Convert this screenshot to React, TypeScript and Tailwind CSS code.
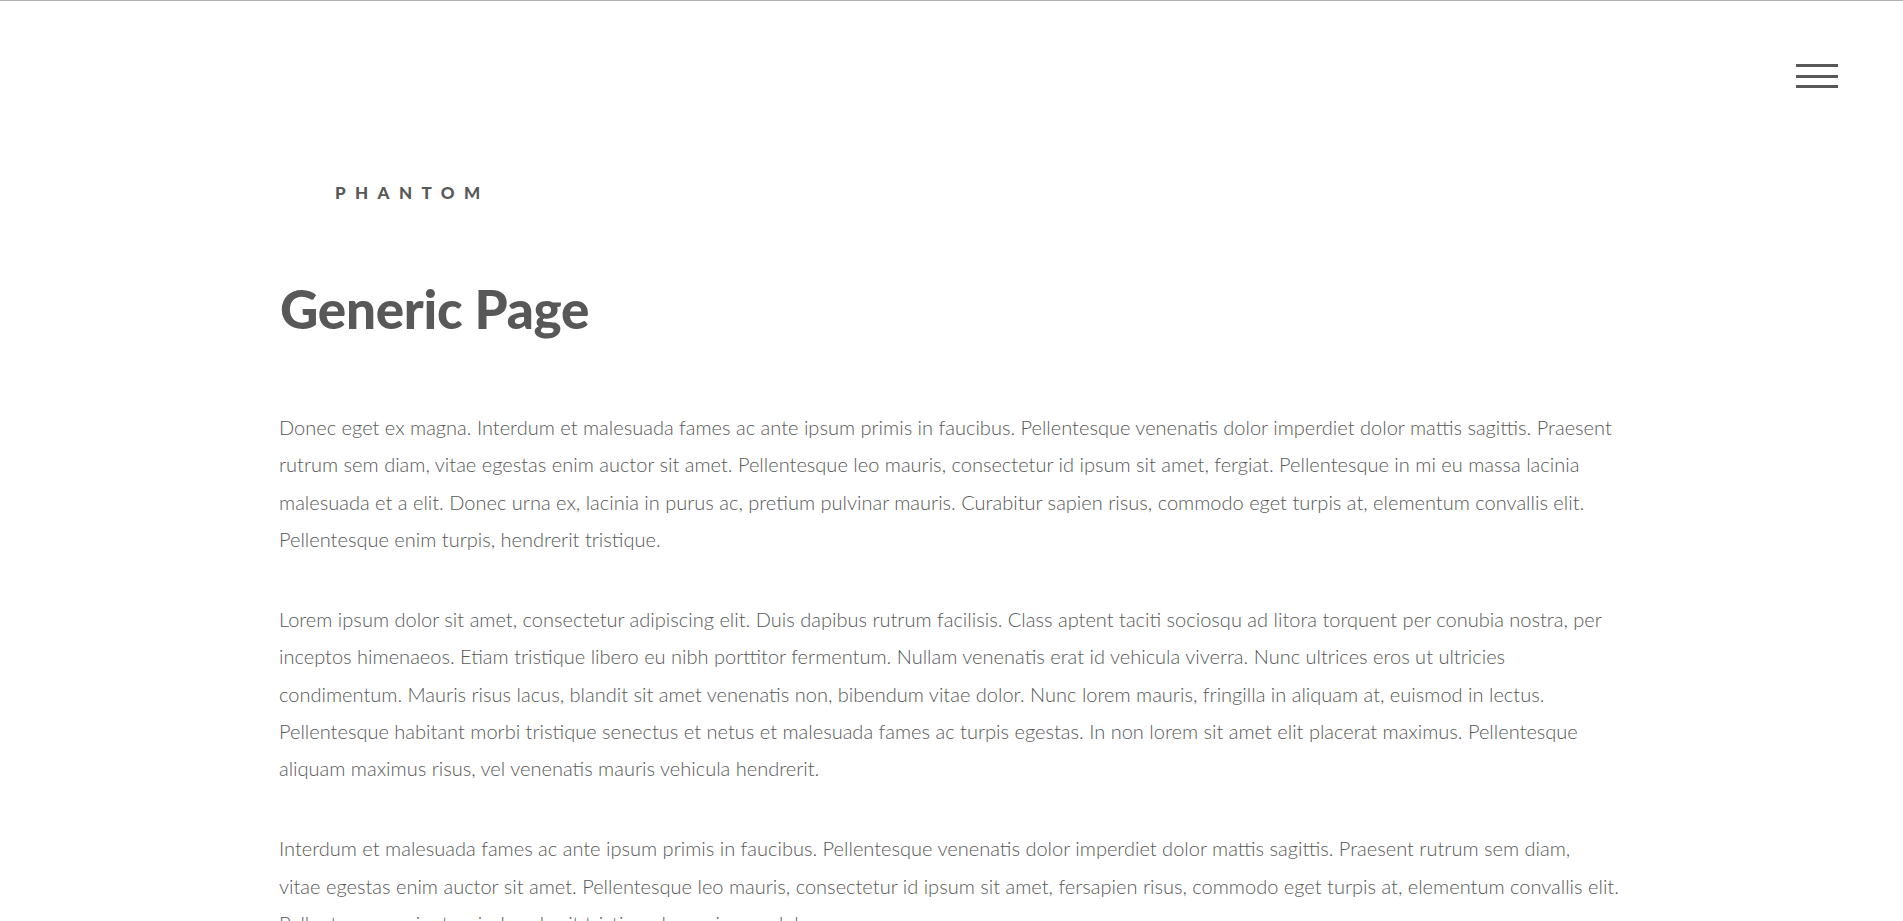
const paragraphs = [
  'Donec eget ex magna. Interdum et malesuada fames ac ante ipsum primis in faucibus. Pellentesque venenatis dolor imperdiet dolor mattis sagittis. Praesent rutrum sem diam, vitae egestas enim auctor sit amet. Pellentesque leo mauris, consectetur id ipsum sit amet, fergiat. Pellentesque in mi eu massa lacinia malesuada et a elit. Donec urna ex, lacinia in purus ac, pretium pulvinar mauris. Curabitur sapien risus, commodo eget turpis at, elementum convallis elit. Pellentesque enim turpis, hendrerit tristique.',
  'Lorem ipsum dolor sit amet, consectetur adipiscing elit. Duis dapibus rutrum facilisis. Class aptent taciti sociosqu ad litora torquent per conubia nostra, per inceptos himenaeos. Etiam tristique libero eu nibh porttitor fermentum. Nullam venenatis erat id vehicula viverra. Nunc ultrices eros ut ultricies condimentum. Mauris risus lacus, blandit sit amet venenatis non, bibendum vitae dolor. Nunc lorem mauris, fringilla in aliquam at, euismod in lectus. Pellentesque habitant morbi tristique senectus et netus et malesuada fames ac turpis egestas. In non lorem sit amet elit placerat maximus. Pellentesque aliquam maximus risus, vel venenatis mauris vehicula hendrerit.',
  'Interdum et malesuada fames ac ante ipsum primis in faucibus. Pellentesque venenatis dolor imperdiet dolor mattis sagittis. Praesent rutrum sem diam, vitae\u00a0egestas enim auctor sit amet. Pellentesque leo mauris, consectetur id ipsum sit amet, fersapien risus, commodo eget turpis at, elementum convallis elit. Pellentesque enim turpis, hendrerit tristique lorem ipsum dolor.',
]

export default function App() {
  return (
    <div className="relative min-h-screen border-t border-[#b2b2b2] bg-white font-['Lato','Liberation_Sans',sans-serif] text-[#585858]">
      {/* menu toggle */}
      <button className="absolute right-[65px] top-[63px] flex w-[42px] flex-col" aria-label="Menu">
        <span className="h-[3px] w-full bg-[#585858]" />
        <span className="mt-[7.5px] h-[3px] w-full bg-[#585858]" />
        <span className="mt-[7.5px] h-[3px] w-full bg-[#585858]" />
      </button>

      <header className="mx-auto w-[1345px] pt-[183px]">
        <a className="ml-[56px] block text-[17px] font-black uppercase leading-[17px] tracking-[9.4px]">
          Phantom
        </a>
      </header>

      <main className="mx-auto w-[1345px] pt-[73px]">
        <h1 className="mb-[66px] ml-[1px] text-[53px] font-black leading-[69px] tracking-[-0.3px]">
          Generic Page
        </h1>
        {paragraphs.map((p, i) => (
          <p key={i} className="mb-[42.67px] text-[20.05px] font-light leading-[37.33px]">
            {p}
          </p>
        ))}
      </main>
    </div>
  )
}
